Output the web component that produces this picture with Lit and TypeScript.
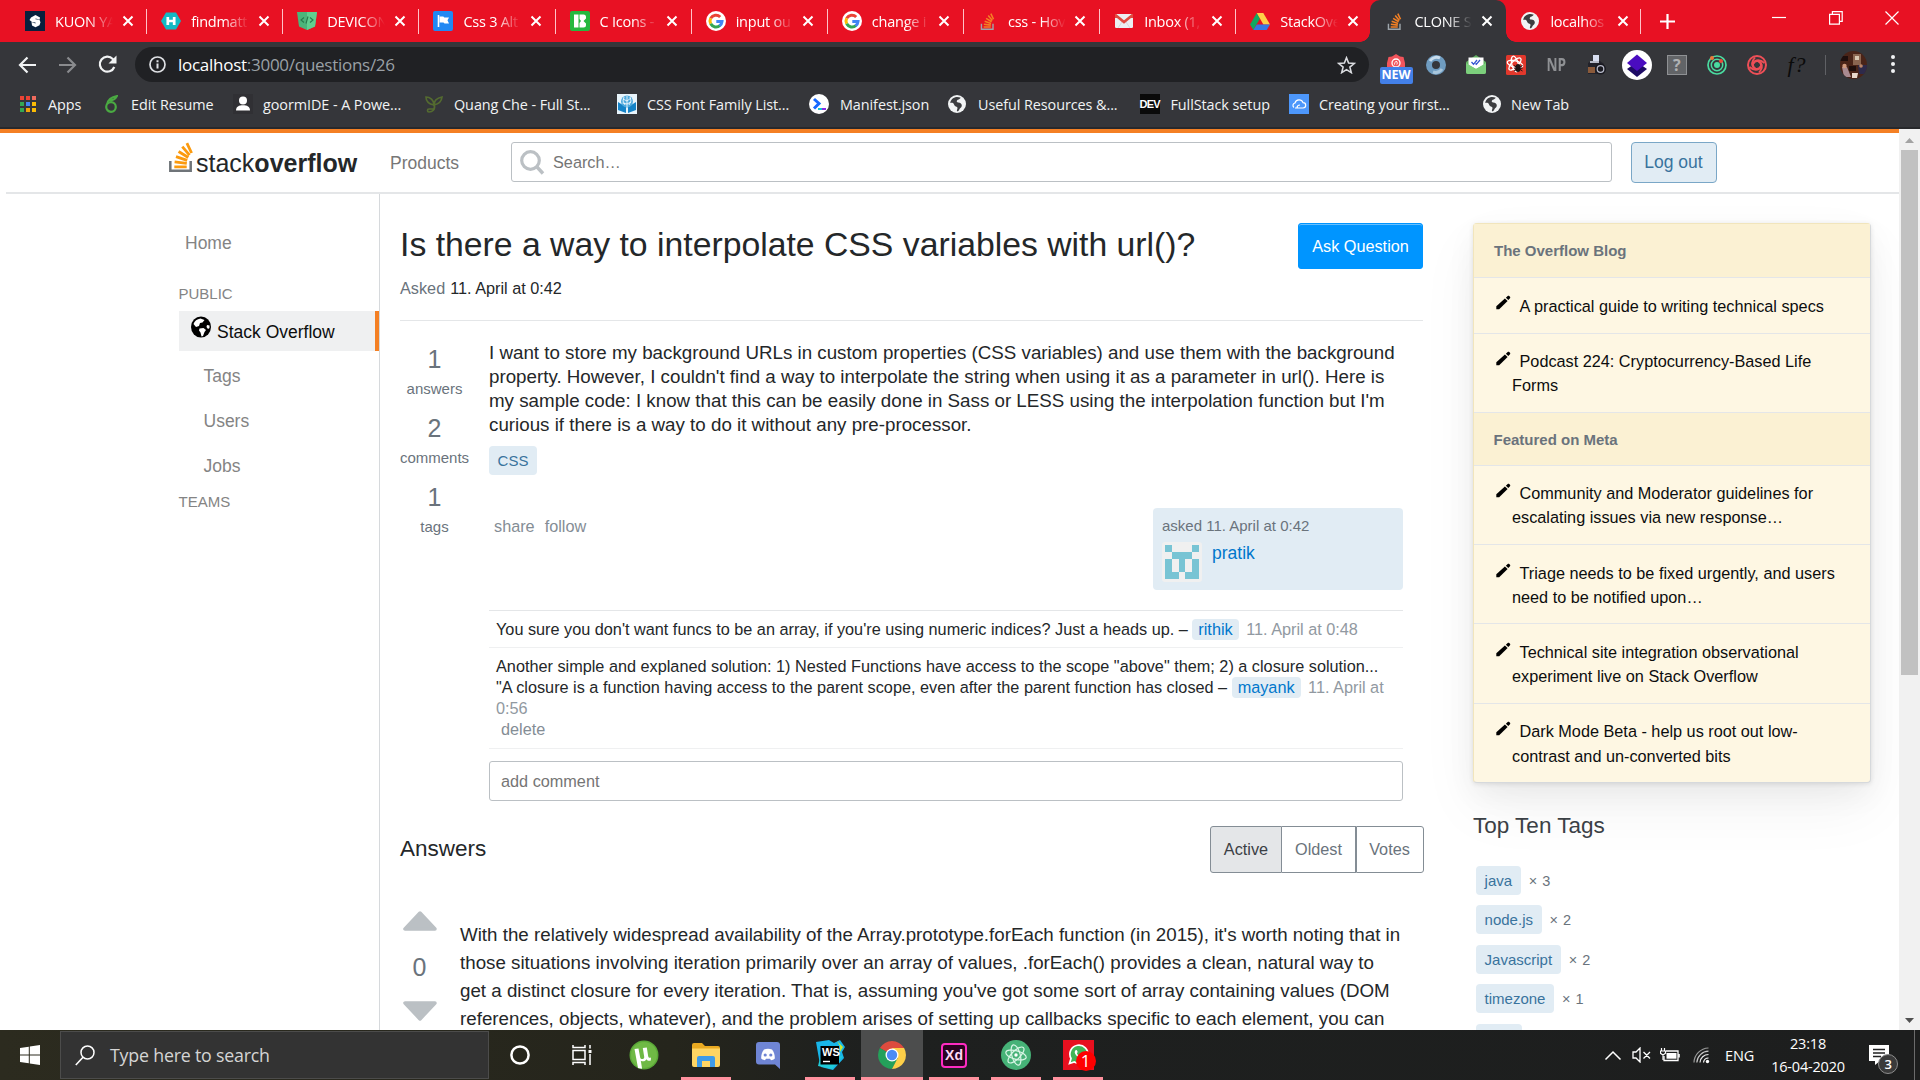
import { LitElement, html, css, svg, TemplateResult } from "lit";
import { customElement } from "lit/decorators.js";
import { classMap } from "lit/directives/class-map.js";

const icon = (w: number, h: number, box: string, body: unknown) =>
  html`<svg width=${w} height=${h} viewBox=${box} fill="none">${body}</svg>`;

const globe = (size = 18) =>
  icon(size, size, "0 0 18 18", svg`<circle cx="9" cy="9" r="9" fill="#f1f3f4"/>
    <path d="M12.800 2.800C11.500 4.800 9.800 4.300 9 5.600c-.6 1-.2 1.700 1.200 1.900 2.200.2 3.800 1.200 3.600 3.300-.2 1.900-1.900 2.300-2.500 3.600-.4.900-.9 1.700-2.300 1.900-.4-1.500.7-2.300.5-3.500-.2-1.100-1.500-1-2.500-1.800-1.100-1-.8-2.100-2-2.900C4.200 7.500 3 7.500 2.200 8 2.500 5 5 2.300 8.500 1.900c1.600-.1 3 .2 4.300.9z" fill="#3c3d40"/>`);

const stackIcon = (w: number, h: number, base: string, bar: string) =>
  icon(w, h, "0 0 24 30", svg`<path d="M1.300 19v9.700h20.400V19" stroke=${base} stroke-width="2.500"/>
    <g stroke=${bar} stroke-width="2.800"><path d="M5.300 24.600h12.400M5.600 19.700l12.200 1.500M7 14.500l11.200 3.700M9.600 9.300l9.700 6M13.300 4.400l7.200 8.500M17.900 1l4.700 9.800" transform="translate(0 .2)"/></g>`);

const google = icon(20, 20, "0 0 20 20", svg`<circle cx="10" cy="10" r="10" fill="#fff"/><g stroke-width="3" transform="translate(10 10)">
  <path d="M4.200-4A6 6 0 0 0-5.300-2.800" stroke="#ea4335"/><path d="M-5.300-2.800A6 6 0 0 0-5.300 2.800" stroke="#fbbc05"/>
  <path d="M-5.300 2.800A6 6 0 0 0 4 4.500" stroke="#34a853"/><path d="M3.600 4.800A6 6 0 0 0 6 .6H.3" stroke="#4285f4"/></g>`);

const favicons: Record<string, TemplateResult> = {
  kuon: icon(20, 20, "0 0 20 20", svg`<rect width="20" height="20" fill="#07203d"/><path d="M15 6.500 10.500 4 6 6.500 4.500 9l2.500 2 3.500.5v1L6.500 11l.5 3.500 3.500 1.700 4-2 1-3-1-2.500-4-.5V7.400l4.200 1z" fill="#fff"/>`),
  hex: icon(20, 20, "0 0 20 20", svg`<path d="M5 1.500h10L20 10l-5 8.500H5L0 10z" fill="#13b9c4"/><path d="M6.800 6v8M13.200 6v8M7 10h6" stroke="#fff" stroke-width="2.700"/>`),
  devicon: icon(20, 20, "0 0 20 20", svg`<path d="M0 1h20l-2 14.500L10 19l-8-3.500z" fill="#4bb57a"/><path d="M10 1h10l-2 14.500L10 19z" fill="#60cf8f"/><path d="m7 6.500-3 2.500 3 2.500m6-5 3 2.500-3 2.500M11 5.500l-2 7" stroke="#27794c" stroke-width="1.100"/>`),
  flag: icon(20, 20, "0 0 20 20", svg`<rect width="20" height="20" rx="2" fill="#2188f3"/><path d="M5.500 4v12" stroke="#fff" stroke-width="1.600"/><path d="M6.500 5.500h3.800l1 1H16L14.500 9.300 16 12.500h-4.500l-1-1h-4z" fill="#fff"/>`),
  icons8: icon(20, 20, "0 0 20 20", svg`<rect width="20" height="20" rx="2" fill="#25b83f"/><path d="M4 3.500h4.500v13H4zM9.500 3.500h4A2.500 2.500 0 0 1 16 6v1.500L13.500 10l2.500 2.500V14a2.500 2.500 0 0 1-2.500 2.500h-4V12l1.500-2-1.500-2z" fill="#fff"/>`),
  google,
  so: stackIcon(15, 17, "#9da5ab", "#f48024"),
  gmail: icon(18, 14, "0 0 18 14", svg`<rect width="18" height="14" rx="1.300" fill="#eceff1"/><path d="m3 14 4.300-6.500M15 14l-4.300-6.500" stroke="#d4d9dc"/><path d="M1.300 4V1.700L9 8l7.700-6.300V4" stroke="#e04a3f" stroke-width="2.600"/>`),
  drive: icon(20, 17, "0 0 20 17", svg`<path d="M6.800 0 0 11.500 3.400 17 10 5.600z" fill="#11a861"/><path d="M6.800 0h6.500L20 11.500h-6.600z" fill="#ffcf48"/><path d="M6.800 11.500H20L16.700 17H3.400z" fill="#3777e3"/>`),
  globe: globe(18),
};

const tabs = [
  ["kuon", "KUON YA"], ["hex", "findmatt"], ["devicon", "DEVICON"], ["flag", "Css 3 Alt"],
  ["icons8", "C Icons -"], ["google", "input ou"], ["google", "change i"], ["so", "css - Hov"],
  ["gmail", "Inbox (1,"], ["drive", "StackOve"], ["so", "CLONE S"], ["globe", "localhos"],
];

const appsGrid = icon(16, 16, "0 0 16 16", [
  ["#ea4335", "#ea4335", "#f06b5d"], ["#34a853", "#4285f4", "#fbbc05"], ["#34a853", "#f0a30a", "#fbbc05"],
].flatMap((row, y) => row.map((c, x) => svg`<rect x=${x * 6} y=${y * 6} width="4" height="4" fill=${c}/>`)));

const bookmarks: { w: number; iw: number; g: number; label: string; art: TemplateResult }[] = [
  { w: 84, iw: 17, g: 11, label: "Apps", art: appsGrid },
  { w: 129, iw: 14, g: 13, label: "Edit Resume", art: icon(14, 18, "0 0 14 18", svg`<circle cx="7" cy="12" r="4.800" stroke="#4aaa42" stroke-width="2.200"/><path d="M3.300 9C4 4.500 7 2 13 1c-1 2-3 4.500-8 4.500" stroke="#4aaa42" stroke-width="1.900"/>`) },
  { w: 192, iw: 20, g: 10, label: "goormIDE - A Powe...", art: icon(20, 20, "0 0 20 20", svg`<rect width="20" height="20" fill="#303034"/><circle cx="10" cy="6.500" r="4" fill="#fff"/><path d="M3 16.500c0-4 3-5.300 7-5.300s7 1.300 7 5.300z" fill="#fff"/>`) },
  { w: 192, iw: 18, g: 11, label: "Quang Che - Full St...", art: icon(18, 18, "0 0 18 18", svg`<path d="M9 10C9 5 5 2 1 2c0 4 3 7 8 8zm0 0c0-4 3-7 8-8-.5 5-3.500 7-8 8z" stroke="#546b30" stroke-width="1.700"/><path d="M9 9c2 6-2 8-5 8-2 0-2-3 0-3h5" stroke="#546b30" stroke-width="1.700"/>`) },
  { w: 192, iw: 20, g: 10, label: "CSS Font Family List...", art: icon(20, 20, "0 0 20 20", svg`<rect width="20" height="20" fill="#e8f4fb"/><path d="M1 8l8 5v6l-8-3zM19 8l-8 5v6l8-3z" fill="#1583c7"/><circle cx="10" cy="7.500" r="6" fill="#50aadd"/><path d="M10 2v11M6 5l4 2 4-3M5.500 9l4.500 1 4-2M7 3l-1 4 2 4M13 3l1 4-2 4" stroke="#fff" stroke-width=".8"/>`) },
  { w: 139, iw: 20, g: 11, label: "Manifest.json", art: icon(20, 20, "0 0 20 20", svg`<circle cx="10" cy="10" r="10" fill="#fff"/><path d="m5 5 5 4.500-5 5" stroke="#1769ff" stroke-width="3"/><path d="M9 15h4" stroke="#12c2d6" stroke-width="2"/><path d="M13 15h4" stroke="#8a2be2" stroke-width="2"/>`) },
  { w: 191.500, iw: 18, g: 12, label: "Useful Resources &...", art: globe(18) },
  { w: 149.500, iw: 20, g: 11, label: "FullStack setup", art: html`<span class="dev">DEV</span>` },
  { w: 194, iw: 20, g: 10, label: "Creating your first...", art: icon(20, 20, "0 0 20 20", svg`<rect width="20" height="20" fill="#4d97fb"/><path d="M6 14h8a2.700 2.700 0 0 0 0-5.400A4.200 4.200 0 0 0 6 9a2.500 2.500 0 0 0-1 4.500M8 14c0-2 1.500-3 3-3" stroke="#fff" stroke-width="1.200"/>`) },
  { w: 90, iw: 18, g: 10, label: "New Tab", art: globe(18) },
];

const extensions: TemplateResult[] = [
  html`<span class="newext">${icon(20, 16, "0 0 20 16", svg`<path d="M2.500 3 6 2.500 10 0l4 2.500 3.500.5L19 9v7H1V9z" fill="#f2545b"/><circle cx="10" cy="9" r="4" stroke="#fff" stroke-width="1.300"/><path d="M8.500 10.500c0-2 1-2.500 1.800-3.500 1.200 1.500 1.200 2.500.5 3.500" stroke="#fff"/>`)}<b>NEW</b></span>`,
  icon(20, 20, "0 0 20 20", svg`<circle cx="10" cy="10" r="7" stroke="#6f9cc0" stroke-width="6"/><path d="M4 6a8 8 0 0 1 10-3" stroke="#c8dcec" stroke-width="3"/><path d="M16 14a8 8 0 0 1-9 3" stroke="#a9c6dc" stroke-width="3"/>`),
  icon(20, 20, "0 0 20 20", svg`<path d="M0 7 10 0l10 7v10a2 2 0 0 1-2 2H2a2 2 0 0 1-2-2z" fill="#5faf5f"/><path d="M2.500 2.500h15V10L10 14 2.500 10z" fill="#fff"/><path d="M0 8l10 6 10-6v9a2 2 0 0 1-2 2H2a2 2 0 0 1-2-2z" fill="#7ccf7c"/><path d="m5.500 7 2 2.300L11 5m-1.500 3.500.8.8L14 5" stroke="#3455d1" stroke-width="1.300"/>`),
  icon(20, 20, "0 0 20 20", svg`<rect width="20" height="20" rx="1.500" fill="#e2382c"/><g stroke="#fff" stroke-width="1.300"><ellipse cx="9" cy="9" rx="8" ry="3.200" transform="rotate(15 9 9)"/><ellipse cx="9" cy="9" rx="8" ry="3.200" transform="rotate(75 9 9)"/><ellipse cx="9" cy="9" rx="8" ry="3.200" transform="rotate(135 9 9)"/></g><ellipse cx="12" cy="13" rx="2.600" ry="4" fill="#1d1414"/><path d="M8 10.500l8.500 5.500M8 16l8.500-5.500M8 13.200h8.500" stroke="#1d1414"/>`),
  html`<span class="np">NP</span>`,
  icon(20, 20, "0 0 20 20", svg`<path d="M6 0h6v6H6z" fill="#d8def0"/><path d="M1 8l4-2h8l4 3v10H1z" fill="#22222a"/><path d="M1 12h7v6H1z" fill="#8a5a3a"/><circle cx="13.500" cy="14" r="5.500" fill="#1a1a20"/><circle cx="13.500" cy="14" r="3.300" stroke="#b9bccb" stroke-width="1.200"/><path d="M3 7h9" stroke="#c8ccda" stroke-width="1.800"/>`),
  icon(30, 30, "0 0 30 30", svg`<circle cx="15" cy="15" r="15" fill="#fff"/><path d="m15 12 10 7-10 8-10-8z" fill="#1e0b66"/><path d="m15 4.500 10 8.500-10 8-10-8z" fill="#4a0cc0"/>`),
  html`<span class="qbox">?</span>`,
  icon(20, 20, "0 0 20 20", svg`<circle cx="10" cy="10" r="9" stroke="#4adba0" stroke-width="1.700"/><circle cx="10" cy="10" r="5.700" stroke="#4adba0" stroke-width="1.500"/><circle cx="10" cy="10" r="3" fill="#4adba0"/><circle cx="5" cy="3" r="2" fill="#f07838"/><circle cx="14" cy="6" r="2" fill="#f04a38"/>`),
  icon(20, 20, "0 0 20 20", svg`<circle cx="10" cy="10" r="9" stroke="#ee4f57" stroke-width="2"/><g stroke="#ee4f57" stroke-width="1.800">${[0, 90, 180, 270].map(a => svg`<path d="M6.500 8.500C8 5.500 12 5 14 8c1.500 2.500 1 6-2 9.500" transform="rotate(${a} 10 10)"/>`)}</g>`),
  html`<span class="fq">f?</span>`,
];

const sideItems: { text: string; kind: string }[] = [
  { text: "Home", kind: "home" }, { text: "PUBLIC", kind: "head public" }, { text: "Stack Overflow", kind: "active" },
  { text: "Tags", kind: "sub" }, { text: "Users", kind: "sub" }, { text: "Jobs", kind: "sub" }, { text: "TEAMS", kind: "head" },
];

const blog: { head?: string; lines?: string[] }[] = [
  { head: "The Overflow Blog" },
  { lines: ["A practical guide to writing technical specs"] },
  { lines: ["Podcast 224: Cryptocurrency-Based Life", "Forms"] },
  { head: "Featured on Meta" },
  { lines: ["Community and Moderator guidelines for", "escalating issues via new response…"] },
  { lines: ["Triage needs to be fixed urgently, and users", "need to be notified upon…"] },
  { lines: ["Technical site integration observational", "experiment live on Stack Overflow"] },
  { lines: ["Dark Mode Beta - help us root out low-", "contrast and un-converted bits"] },
];

const pencil = icon(15, 15, "0 0 15 15", svg`<path d="M.3 14.300v-3l8.600-7.800 2.700 2.500-8.400 8.300z" fill="#000"/><path d="m9.900 2.800 1.800-1.800c.5-.5 1.100-.4 1.500-.1l.8.8c.4.400.4 1 0 1.500l-1.700 1.900z" fill="#000"/>`);

const tray = {
  chevron: icon(18, 11, "0 0 18 11", svg`<path d="m1.500 9.500 7.500-7.500 7.500 7.500" stroke="#fff" stroke-width="1.500"/>`),
  sound: icon(20, 16, "0 0 20 16", svg`<path d="M1 5h3l4-4v14l-4-4H1zM11.500 5l6.500 6.500M18 5l-6.500 6.500" stroke="#fff" stroke-width="1.300"/>`),
  battery: icon(20, 14, "0 0 20 14", svg`<path d="M6 3h12v9.500H4V8" stroke="#fff" stroke-width="1.300"/><path d="M6.500 5h10v5.700h-10z" fill="#fff"/><path d="M19 6v3.500" stroke="#fff" stroke-width="1.600"/><path d="M.5 3h5v2.300L3 7 .5 5.300zM1.500 0v3M4.500 0v3M3 6v6" stroke="#fff" stroke-width="1.200"/>`),
  wifi: icon(17, 17, "0 0 17 17", svg`<g stroke="#fff" stroke-width="1.200"><path d="M10.500 15.500a5 5 0 0 1 5-4.500"/><path d="M7 15.500a8.500 8.500 0 0 1 8.500-8" opacity=".9"/><path d="M3.800 15.500A12 12 0 0 1 15.500 4.200" opacity=".75"/><path d="M1 15.500A15 15 0 0 1 15.500 1" opacity=".55"/></g><circle cx="14.500" cy="14.500" r="1.700" fill="#fff"/>`),
};

const taskApps: { art: TemplateResult; run?: boolean; active?: boolean }[] = [
  { art: icon(20, 22, "0 0 20 22", svg`<circle cx="10" cy="11" r="8.600" stroke="#fff" stroke-width="2.500"/>`) },
  { art: icon(22, 20, "0 0 22 20", svg`<path d="M2 5.500h12v9H2zM2 0v2.500h12V0M2 20v-2.500h12V20M19 0v3.500M19 9v11" stroke="#fff" stroke-width="1.500"/><rect x="17.500" y="5" width="3" height="3" fill="#fff"/>`) },
  { art: icon(30, 30, "0 0 30 30", svg`<circle cx="15" cy="15" r="14.500" fill="#5aa837"/><circle cx="15" cy="15" r="13" fill="#6fb945"/><path d="M9 28 5.500 9l4-.5 1.700 9c.5 2.500 4.500 2 4-.8L13.800 8l4-.6 1.400 8.800c.3 1.600 1.600 2 2.800 1.300l-.2 3c-1.500.7-3.500.3-4.300-1.200-1 2-3.500 2.700-5.700 1.400l1.300 8z" fill="#fff"/>`) },
  { run: true, art: icon(28, 24, "0 0 28 24", svg`<path d="M0 2a2 2 0 0 1 2-2h8l3 3h13a2 2 0 0 1 2 2v7H0z" fill="#e9a921"/><path d="M0 5.500h28V22a2 2 0 0 1-2 2H2a2 2 0 0 1-2-2z" fill="#ffd563"/><path d="M5 24V15a2 2 0 0 1 2-2h14a2 2 0 0 1 2 2v9h-5v-6h-8v6z" fill="#3f9be8"/>`) },
  { art: icon(24, 27, "0 0 24 27", svg`<path d="M3 0h18a3 3 0 0 1 3 3v24l-5-4.500H3a3 3 0 0 1-3-3V3a3 3 0 0 1 3-3z" fill="#6f85d4"/><path d="M8 7.500c2.500-1 5.500-1 8 0 2 2.600 3 5.500 2.800 9-1.200 1-2.300 1.500-3.800 1.800l-1-1.600h-4l-1 1.600c-1.500-.3-2.600-.8-3.800-1.800C5 13 6 10.100 8 7.500z" fill="#fff"/><circle cx="9.200" cy="13" r="1.600" fill="#6f85d4"/><circle cx="14.800" cy="13" r="1.600" fill="#6f85d4"/>`) },
  { run: true, art: html`<span class="ws">${icon(30, 30, "0 0 30 30", svg`<path d="M1 2 14 0l5 3 6-3 5 7-3 5 2 6-11 12-12-3-2-8z" fill="#18b5e8"/><path d="m22 1 6 6-3 5V6z" fill="#c9ea35"/><path d="M5 18 3 26l14 3 11-13z" fill="#20cbd8"/><rect x="5.500" y="6" width="18.500" height="18.500" fill="#000"/><path d="M8 21.500h7" stroke="#fff" stroke-width="1.400"/>`)}<b>WS</b></span>` },
  { run: true, active: true, art: icon(28, 28, "0 0 28 28", svg`<path d="M14 14 1.900 7A14 14 0 0 1 26.100 7z" fill="#dd4b3e"/><path d="M14 14 1.900 7A14 14 0 0 0 14 28l5.700-10z" fill="#24a05a"/><path d="M14 28A14 14 0 0 0 26.100 7H14l5.600 10.200z" fill="#fdcf48"/><circle cx="14" cy="14" r="6.500" fill="#fff"/><circle cx="14" cy="14" r="5.200" fill="#4c8bf5"/>`) },
  { run: true, art: html`<span class="xd">Xd</span>` },
  { run: true, art: icon(30, 30, "0 0 30 30", svg`<circle cx="15" cy="15" r="15" fill="#46b277"/><g stroke="#d8f5e5" stroke-width="1.200"><ellipse cx="15" cy="15" rx="10.500" ry="4.200" transform="rotate(15 15 15)"/><ellipse cx="15" cy="15" rx="10.500" ry="4.200" transform="rotate(75 15 15)"/><ellipse cx="15" cy="15" rx="10.500" ry="4.200" transform="rotate(135 15 15)"/></g><circle cx="15" cy="15" r="1.700" fill="#fff"/>`) },
  { run: true, art: html`<span class="wa">${icon(31, 30, "0 0 31 30", svg`<rect width="31" height="30" fill="#e8101f"/><path d="M6.500 23.500 8 18.500a9 9 0 1 1 3.300 3.400z" fill="#41b457" stroke="#fff" stroke-width="1.700"/><path d="M12 11c1-1.600 2-.9 2.600.8.300.9-1.100 1.300-.4 2.300 1 1.400 2 2 3.300 2.500.8.200 1.200-1.500 2-1.200 2 .8 2 1.500 1.300 2.300-1.700 1.800-4.500.5-6.300-1-2-1.700-3.500-4-2.500-5.700z" fill="#fff"/>`)}<b>1</b></span>` },
];

@customElement("app-root")
export class AppRoot extends LitElement {
  static styles = css`
    :host { display: flex; flex-direction: column; width: 1920px; height: 1080px; overflow: hidden; background: #fff; font-family: "Liberation Sans", Arial, sans-serif; color: #242729; }
    * { box-sizing: border-box; }
    svg { display: block; flex: none; }
    .ui { font-family: "Open Sans", "Noto Sans", sans-serif; }
    .tabstrip { height: 42px; flex: none; background: #e81123; display: flex; align-items: stretch; padding-left: 11px; color: #fff; }
    .tab { width: 136.150px; flex: none; display: flex; align-items: center; padding-left: 14px; position: relative; }
    .tab::after { content: ""; position: absolute; right: 0; top: 9px; width: 1px; height: 25px; background: #ffc2c7; }
    .tab.active { background: #35363a; border-radius: 10px 10px 0 0; width: 136px; }
    .tab.active::before { content: ""; position: absolute; left: -10px; right: -10px; bottom: 0; height: 10px;
      background: radial-gradient(circle at 0 0, transparent 9.500px, #35363a 10px) left / 10px 10px no-repeat, radial-gradient(circle at 100% 0, transparent 9.500px, #35363a 10px) right / 10px 10px no-repeat; }
    .tab.active::after, .tab.quiet::after { display: none; }
    .tab.quiet { width: 134.200px; }
    .tab.lasttab { width: 135px; }
    .fav { width: 20px; margin-right: 10px; display: flex; justify-content: center; flex: none; }
    .tabtext { width: 64px; margin-right: -7px; font-size: 14.500px; letter-spacing: -.25px; white-space: nowrap; flex: none; -webkit-mask-image: linear-gradient(90deg, #000 33px, transparent 58px); mask-image: linear-gradient(90deg, #000 33px, transparent 58px); }
    .close { margin-left: 9.500px; }
    .plus { margin: 0 0 0 19px; display: flex; align-items: center; }
    .winbtns { margin-left: auto; display: flex; align-items: center; height: 36px; gap: 42.500px; padding-right: 21px; }
    .toolbar { height: 44px; flex: none; background: #35363a; display: flex; align-items: center; padding: 1px 0 0 18px; }
    .nav { display: flex; align-items: center; gap: 21px; width: 117px; }
    .omni { width: 1234px; height: 35px; border-radius: 18px; background: #202124; color: #9aa0a6; display: flex; align-items: center; padding: 0 13px 0 14px; }
    .url { margin: -1px 0 0 12px; font-size: 17px; letter-spacing: -.27px; }
    .url b { font-weight: 400; color: #fff; }
    .star { margin-left: auto; }
    .exts { display: flex; margin-left: 7px; height: 40px; }
    .ext { width: 40.100px; display: flex; align-items: center; justify-content: center; }
    .newext { width: 34px; display: flex; flex-direction: column; align-items: center; padding-top: 8px; }
    .newext b { font: 700 12.500px "Open Sans", sans-serif; line-height: 16px; width: 33px; height: 17px; margin-top: -3px; background: #4380e8; color: #fff; border-radius: 2px; text-align: center; z-index: 1; }
    .np { color: #8f9194; font: 700 17px "Open Sans", sans-serif; transform: scaleX(.8); }
    .qbox { width: 20px; height: 20px; background: #626467; border: 1px solid #8f9194; color: #b0b2b4; font: 700 16px/18px "Open Sans", sans-serif; text-align: center; }
    .fq { color: #0b0b0b; font: italic 22px/24px "Liberation Serif", serif; letter-spacing: 1px; }
    .vsep { width: 1px; height: 20px; background: #606165; margin: 10px 14px 0 8px; }
    .avatar { margin-top: 6px; }
    .dots { margin: 9px 0 0 24px; }
    .bookmarks { height: 41px; flex: none; background: #35363a; display: flex; align-items: flex-start; padding: 7px 0 0 20px; color: #f1f3f4; font-size: 14.400px; letter-spacing: -.07px; }
    .bm { display: flex; align-items: center; flex: none; height: 22px; white-space: nowrap; }
    .bmi { display: flex; flex: none; }
    .dev { width: 20px; height: 20px; background: #0a0a0a; color: #fff; font: 700 11px/20px "Liberation Sans", sans-serif; letter-spacing: -.8px; text-align: center; }
    .edge { height: 2px; flex: none; background: #28292c; }
    .viewport { height: 901px; flex: none; display: flex; overflow: hidden; }
    .page { width: 1899px; flex: none; border-top: 4px solid #f48024; display: flex; flex-direction: column; height: 901px; overflow: hidden; }
    .header { height: 61px; flex: none; border-bottom: 2px solid #e4e6e8; margin-left: 6px; padding-left: 162.500px; display: flex; align-items: flex-start; }
    .logo { display: flex; margin-top: 9px; width: 221.500px; }
    .logotext { font-size: 25px; line-height: 28px; margin: 7px 0 0 3.500px; }
    .products { font-size: 17.500px; line-height: 20px; margin-top: 20px; color: #777; width: 121px; }
    .search { width: 1101px; height: 40px; margin-top: 9px; border: 1px solid #bbc0c4; border-radius: 3px; display: flex; align-items: center; padding-left: 8px; font-size: 16.250px; color: #757575; }
    .search span { margin-left: 8px; }
    .logout { margin: 9px 0 0 19px; width: 86px; height: 41px; border: 1px solid #7aa7c7; border-radius: 4px; background: #e1ecf4; color: #39739d; font-size: 17.500px; line-height: 38px; text-align: center; text-indent: -1px; }
    .cols { flex: 1; display: flex; min-height: 0; }
    .side { width: 380px; flex: none; border-right: 1px solid #d6d9dc; padding: 39px 0 0 179px; font-size: 17.500px; color: #848484; }
    .side div { line-height: 20px; }
    .home { padding-left: 6px; margin-bottom: 31px; }
    .side .head { font-size: 15px; text-indent: -.5px; }
    .side .public { margin-bottom: 7px; }
    .side .active { height: 40px; background: #eff0f1; border-right: 4px solid #f48024; color: #0c0d0e; display: flex; padding: 5px 0 0 12px; margin-bottom: 15px; }
    .side .active span { margin: 6px 0 0 6px; }
    .side .sub { padding-left: 24.500px; margin-bottom: 25px; }
    .side .sub.last { margin-bottom: 16px; }
    .main { width: 1024px; flex: none; margin-left: 20px; padding-top: 29px; white-space: nowrap; }
    .titlerow { display: flex; justify-content: space-between; height: 46px; width: 1023px; }
    h1 { margin: 0; font-size: 33.750px; font-weight: 400; line-height: 43px; }
    .ask { width: 125px; height: 46px; background: #0095ff; border-radius: 3px; border: 1px solid #0095ff; box-shadow: inset 0 1px 0 rgba(255,255,255,.4); color: #fff; font-size: 16.250px; line-height: 44px; text-align: center; }
    .asked { font-size: 16.250px; line-height: 20px; margin-top: 9px; color: #242729; }
    .asked span { color: #6a737c; margin-right: 5px; }
    .rule { height: 1px; width: 1023px; background: #e4e6e8; margin-top: 22px; }
    .post { display: flex; height: 481px; }
    .stats { width: 69px; margin-right: 20px; flex: none; padding-top: 23px; color: #6a737c; text-align: center; }
    .stat { height: 69px; display: flex; flex-direction: column; align-items: center; }
    .stat b { font-weight: 400; font-size: 25px; line-height: 30px; }
    .stat span { font-size: 15px; line-height: 20px; margin-top: 5px; }
    .body { width: 914px; flex: none; padding-top: 20px; }
    .text { font-size: 18.750px; line-height: 24.150px; height: 97px; }
    .chip { display: inline-block; background: #e1ecf4; color: #39739d; border-radius: 4px; font-size: 15px; line-height: 29px; height: 29px; padding: 0 8.600px; }
    .qtag { margin-top: 8px; height: 29px; }
    .actions { display: flex; justify-content: space-between; height: 82px; margin-top: 33px; }
    .links { font-size: 16.250px; color: #848d95; display: flex; gap: 10px; padding: 8px 0 0 5px; line-height: 20px; }
    .card { width: 250px; height: 82px; background: #e1ecf4; border-radius: 4px; padding: 8px 9px; font-size: 15px; line-height: 20px; color: #6a737c; }
    .who { display: flex; margin-top: 6px; }
    .who span { color: #0077cc; font-size: 17.500px; line-height: 22px; margin-left: 10px; }
    .comments { margin-top: 20px; border-top: 1px solid #e4e6e8; font-size: 16.250px; line-height: 21px; }
    .comment { border-bottom: 1px solid #eff0f1; padding: 8px 7px 7px; }
    .comment + .comment { padding-bottom: 8px; }
    .comment .ln { height: 21px; }
    .comment em { font-style: normal; color: #9199a1; }
    .userchip { background: #e1ecf4; color: #0077cc; border-radius: 4px; padding: 1px 6px 2px; margin: 0 3px 0 0; }
    .comment .del { padding-left: 5px; color: #848d95; }
    .addc { height: 40px; border: 1px solid #bbc0c4; border-radius: 3px; margin-top: 12px; padding-left: 11px; font-size: 16.250px; line-height: 39px; color: #757575; }
    .arow { display: flex; justify-content: space-between; align-items: center; height: 47px; margin-top: 24px; width: 1024px; font-size: 22.500px; }
    .arow > span { margin-top: -1px; }
    .group { display: flex; height: 47px; font-size: 16.250px; line-height: 44px; color: #6a737c; text-align: center; }
    .group div { border: 1px solid #848d95; }
    .group .g1 { width: 72px; background: #e4e6e8; color: #3b4045; border-radius: 3px 0 0 3px; }
    .group .g2 { width: 74px; border-left: 0; }
    .group .g3 { width: 68px; border-radius: 0 3px 3px 0; text-indent: -1px; }
    .answer { display: flex; margin-top: 38px; }
    .vote { width: 34px; margin-left: 3px; display: flex; flex-direction: column; align-items: center; font-size: 25px; color: #6a737c; }
    .vote span { line-height: 30px; margin: 21px 1px 19px 0; }
    .atext { margin: 10px 0 0 23px; font-size: 18.750px; line-height: 28.125px; }
    .right { margin-left: 49px; padding-top: 29px; width: 398px; flex: none; white-space: nowrap; }
    .widget { border: 1px solid #f1e5bc; border-right-color: #d6d9dc; border-bottom-color: #d6d9dc; border-radius: 4px; background: #fef7e3; box-shadow: 0 12px 30px rgba(0,0,0,.05), 0 25px 60px rgba(0,0,0,.05), 0 1px 5px rgba(0,0,0,.1); }
    .whead { height: 53.500px; background: #fbf1d3; font-size: 15px; font-weight: 700; color: #6a737c; line-height: 54px; padding-left: 20px; border-bottom: 1px solid #e4e6e8; }
    .witem + .whead { height: 52.500px; line-height: 53px; text-indent: -.5px; }
    .witem { border-bottom: 1px solid #e4e6e8; font-size: 16.250px; line-height: 24.200px; color: #0c0d0e; padding: 15.500px 0 14.500px 38px; position: relative; }
    .whead + .witem { padding-top: 16.500px; }
    .whead + .witem.two { padding-top: 15.500px; }
    .witem.last { border-bottom: 0; }
    .witem div:first-of-type { padding-left: 7.500px; }
    .witem svg { position: absolute; left: 22px; top: 17.500px; }
    .ttt { font-size: 22.500px; line-height: 28px; color: #3b4045; margin: 29px 0 25.500px 0; }
    .trow { display: flex; height: 39.500px; padding-left: 3px; font-size: 15px; line-height: 30px; color: #6a737c; }
    .trow .x { margin-left: 8px; word-spacing: 1px; font-size: 14.500px; }
    .scroll { width: 21px; background: #f1f1f1; display: flex; flex-direction: column; align-items: center; padding: 9px 0 7px; }
    .thumb { width: 17px; height: 525px; background: #c1c1c1; margin: 7px 0 auto; }
    .taskbar { height: 50px; flex: none; background: linear-gradient(90deg, #2c2b1f 0, #25251c 35%, #1e201f 45%, #1d1e1e 100%); display: flex; color: #fff; }
    .win { width: 60px; display: flex; align-items: center; justify-content: center; }
    .tsearch { width: 429px; margin: 1px 0; background: #333; border: 1px solid #4c4c4b; display: flex; align-items: center; padding-left: 14px; font-size: 17.800px; letter-spacing: -.2px; color: #d5d5d5; }
    .tsearch span { margin-left: 15px; }
    .app { width: 62px; display: flex; align-items: center; justify-content: center; position: relative; }
    .app.run::after { content: ""; position: absolute; left: 6px; right: 6px; bottom: 0; height: 3px; background: #ff919e; }
    .app.active { background: #4c4d4d; }
    .app.active::after { left: 0; right: 0; }
    .ws, .wa { position: relative; }
    .ws b { position: absolute; left: 7px; top: 6px; font: 700 11px/13px "Liberation Sans", sans-serif; }
    .wa b { position: absolute; left: 13px; top: 11px; width: 20px; height: 20px; border-radius: 50%; background: #f00; font: 400 17px/20px "Open Sans", sans-serif; text-align: center; }
    .xd { width: 26px; height: 25px; border: 2px solid #ff2bc2; border-radius: 4px; background: #2a0320; font: 700 14px/20px "Liberation Sans", sans-serif; text-align: center; color: #ffd9f5; }
    .tray { margin-left: auto; display: flex; align-items: center; font-size: 14.500px; letter-spacing: -.2px; }
    .t1 { margin-right: 10px; } .t2 { margin-right: 8px; } .t3 { margin-right: 13px; } .t4 { margin-right: 15px; }
    .clock { text-align: center; line-height: 23px; width: 90px; margin-left: 9px; }
    .clock div { white-space: nowrap; }
    .note { position: relative; margin: 0 25px 0 16px; width: 20px; height: 20px; }
    .note b { position: absolute; left: 9px; top: 9px; width: 20px; height: 20px; border-radius: 50%; border: 1px solid #8d8d8d; background: #3a3a3a; font-size: 13px; line-height: 18px; text-align: center; font-weight: 600; }
    .peek { width: 1px; height: 50px; background: #6b6b6b; margin-right: 5px; }
  `;

  private chrome() {
    return html`
      <div class="tabstrip ui">
        ${tabs.map(([f, t], i) => html`<div class=${classMap({ tab: true, active: i === 10, quiet: i === 9, lasttab: i === 11 })}>
          <span class="fav">${favicons[f]}</span><span class="tabtext">${t}</span>
          <svg class="close" width="12" height="12" viewBox="0 0 12 12"><path d="m1.500 1.500 9 9m0-9-9 9" stroke="#fff" stroke-width="2"/></svg>
        </div>`)}
        <span class="plus">${icon(15, 15, "0 0 15 15", svg`<path d="M7.500 0v15M0 7.500h15" stroke="#fff" stroke-width="2.200"/>`)}</span>
        <span class="winbtns">
          ${icon(14, 14, "0 0 14 14", svg`<path d="M0 6.500h14" stroke="#fff" stroke-width="1.200"/>`)}
          ${icon(14, 14, "0 0 14 14", svg`<path d="M.6 3.400h9.800v9.800H.6zM3.400 3V.6h9.800v9.800h-2.400" stroke="#fff" stroke-width="1.200"/>`)}
          ${icon(14, 14, "0 0 14 14", svg`<path d="m.5.5 13 13m0-13-13 13" stroke="#fff" stroke-width="1.200"/>`)}
        </span>
      </div>
      <div class="toolbar ui">
        <span class="nav">
          ${icon(19, 18, "0 0 19 18", svg`<path d="M18 9H3M9.500 1.500 2 9l7.500 7.500" stroke="#f1f3f4" stroke-width="2.200"/>`)}
          ${icon(19, 18, "0 0 19 18", svg`<path d="M1 9h15M9.500 1.500 17 9l-7.500 7.500" stroke="#8a8b8e" stroke-width="2.200"/>`)}
          ${icon(19, 19, "0 0 19 19", svg`<path d="M16.300 12A7.500 7.500 0 1 1 14.800 4l2 2" stroke="#f1f3f4" stroke-width="2.200"/><path d="M18.500.5v8h-8z" fill="#f1f3f4"/>`)}
        </span>
        <div class="omni">
          ${icon(17, 17, "0 0 17 17", svg`<circle cx="8.500" cy="8.500" r="7.500" stroke="#dfe1e5" stroke-width="1.700"/><path d="M8.500 7.500v5M8.500 4.200v2" stroke="#dfe1e5" stroke-width="2"/>`)}
          <span class="url"><b>localhost</b>:3000/questions/26</span>
          <span class="star">${icon(19, 18, "0 0 19 18", svg`<path d="m9.500 1.800 2.100 5.300 5.600.4-4.300 3.600 1.400 5.500-4.800-3-4.800 3 1.400-5.500L1.800 7.500l5.600-.4z" stroke="#dadce0" stroke-width="1.600"/>`)}</span>
        </div>
        <div class="exts">
          ${extensions.map(e => html`<span class="ext">${e}</span>`)}
          <i class="vsep"></i>
          <span class="avatar">${icon(27, 28, "0 0 27 28", svg`<clipPath id="c"><ellipse cx="13.500" cy="14" rx="13.500" ry="14"/></clipPath><g clip-path="url(#c)"><path fill="#4a2418" d="M0 0h27v28H0z"/><path fill="#8a6550" d="M13 3h8v11h-8z"/><path fill="#d8c6b0" d="M15 5h4v4h-4z"/><path fill="#a98a90" d="M2 16h5l4 10H4z"/><path fill="#2e2a4a" d="M18 14h9v9h-8z"/><path fill="#e8d8cc" d="M12 22h6l-1 5h-5z"/><path fill="#1e0e0c" d="M0 5h8v5H0zM9 15h7v5H9z"/><circle cx="4.500" cy="15" r="2.200" fill="#d29a7c"/><circle cx="21" cy="15" r="1.800" fill="#b98468"/></g>`)}</span>
          <span class="dots">${icon(4, 20, "0 0 4 20", svg`<g fill="#f1f3f4"><circle cx="2" cy="3" r="2"/><circle cx="2" cy="10" r="2"/><circle cx="2" cy="17" r="2"/></g>`)}</span>
        </div>
      </div>
      <div class="bookmarks ui">
        ${bookmarks.map(b => html`<span class="bm" style="width:${b.w}px"><span class="bmi" style="width:${b.iw + b.g}px">${b.art}</span>${b.label}</span>`)}
      </div>
      <div class="edge"></div>`;
  }

  private question() {
    const cell = "#78c4d4";
    return html`<div class="main">
      <div class="titlerow"><h1>Is there a way to interpolate CSS variables with url()?</h1><div class="ask">Ask Question</div></div>
      <div class="asked"><span>Asked</span>11. April at 0:42</div>
      <div class="rule"></div>
      <div class="post">
        <div class="stats">
          ${[["1", "answers"], ["2", "comments"], ["1", "tags"]].map(([n, l]) => html`<div class="stat"><b>${n}</b><span>${l}</span></div>`)}
        </div>
        <div class="body">
          <div class="text">
            <div>I want to store my background URLs in custom properties (CSS variables) and use them with the background</div>
            <div>property. However, I couldn't find a way to interpolate the string when using it as a parameter in url(). Here is</div>
            <div>my sample code: I know that this can be easily done in Sass or LESS using the interpolation function but I'm</div>
            <div>curious if there is a way to do it without any pre-processor.</div>
          </div>
          <div class="qtag"><span class="chip">CSS</span></div>
          <div class="actions">
            <div class="links"><span>share</span><span>follow</span></div>
            <div class="card">asked 11. April at 0:42
              <div class="who">${icon(40, 40, "0 0 40 40", svg`<rect width="40" height="40" rx="3" fill="#f0f0f0"/><path fill=${cell} d="M3 3h7v7H3zM30 3h7v7h-7zM10 10h20v7h7v20H23v-7h7V17h-7v13h-6V17h-7v13h7v7H3V17h7z"/>`)}<span>pratik</span></div>
            </div>
          </div>
          <div class="comments">
            <div class="comment"><div class="ln">You sure you don't want funcs to be an array, if you're using numeric indices? Just a heads up. – <span class="userchip">rithik</span> <em>11. April at 0:48</em></div></div>
            <div class="comment">
              <div class="ln">Another simple and explaned solution: 1) Nested Functions have access to the scope "above" them; 2) a closure solution...</div>
              <div class="ln">"A closure is a function having access to the parent scope, even after the parent function has closed – <span class="userchip">mayank</span> <em>11. April at</em></div>
              <div class="ln"><em>0:56</em></div>
              <div class="ln del">delete</div>
            </div>
          </div>
          <div class="addc">add comment</div>
        </div>
      </div>
      <div class="arow"><span>Answers</span><div class="group"><div class="g1">Active</div><div class="g2">Oldest</div><div class="g3">Votes</div></div></div>
      <div class="answer">
        <div class="vote">
          ${icon(34, 20, "0 0 34 20", svg`<path d="M2 18h30L17 2z" fill="#bbc0c4" stroke="#bbc0c4" stroke-width="3.500" stroke-linejoin="round"/>`)}
          <span>0</span>
          ${icon(34, 20, "0 0 34 20", svg`<path d="M2 2h30L17 18z" fill="#bbc0c4" stroke="#bbc0c4" stroke-width="3.500" stroke-linejoin="round"/>`)}
        </div>
        <div class="atext">
          <div>With the relatively widespread availability of the Array.prototype.forEach function (in 2015), it's worth noting that in</div>
          <div>those situations involving iteration primarily over an array of values, .forEach() provides a clean, natural way to</div>
          <div>get a distinct closure for every iteration. That is, assuming you've got some sort of array containing values (DOM</div>
          <div>references, objects, whatever), and the problem arises of setting up callbacks specific to each element, you can</div>
        </div>
      </div>
    </div>`;
  }

  private rightRail() {
    return html`<div class="right">
      <div class="widget">
        ${blog.map((b, i) => b.head ? html`<div class="whead">${b.head}</div>`
          : html`<div class=${classMap({ witem: true, two: b.lines!.length > 1, last: i === blog.length - 1 })}>${pencil}${b.lines!.map(l => html`<div>${l}</div>`)}</div>`)}
      </div>
      <div class="ttt">Top Ten Tags</div>
      ${[["java", "3"], ["node.js", "2"], ["Javascript", "2"], ["timezone", "1"]].map(([t, n]) => html`<div class="trow"><span class="chip">${t}</span><span class="x">× ${n}</span></div>`)}
      <div class="trow"><span class="chip">html</span></div>
    </div>`;
  }

  private taskbar() {
    return html`<div class="taskbar ui">
      <span class="win">${icon(20, 20, "0 0 20 20", svg`<path d="M0 3 8.800 1.700v7.800H0zM9.800 1.500 20 0v9.500H9.800zM0 10.500h8.800v7.800L0 17zM9.800 10.500H20V20L9.800 18.500z" fill="#fff"/>`)}</span>
      <div class="tsearch">${icon(20, 21, "0 0 20 21", svg`<circle cx="12.500" cy="7.500" r="6.500" stroke="#fff" stroke-width="1.500"/><path d="M8 12.300.8 20" stroke="#fff" stroke-width="1.600"/>`)}<span>Type here to search</span></div>
      ${taskApps.map(a => html`<span class=${classMap({ app: true, run: !!a.run, active: !!a.active })}>${a.art}</span>`)}
      <div class="tray">
        <span class="t1">${tray.chevron}</span><span class="t2">${tray.sound}</span><span class="t3">${tray.battery}</span><span class="t4">${tray.wifi}</span>ENG
        <div class="clock"><div>23:18</div><div>16-04-2020</div></div>
        <span class="note">${icon(20, 20, "0 0 20 20", svg`<path d="M0 0h20v16h-9l-5 4v-4H0z" fill="#fff"/><path d="M4 4.500h12M4 8h12M4 11.500h8" stroke="#222" stroke-width="1.300"/>`)}<b>3</b></span>
        <i class="peek"></i>
      </div>
    </div>`;
  }

  render() {
    return html`
      ${this.chrome()}
      <div class="viewport">
        <div class="page">
          <div class="header">
            <div class="logo">${stackIcon(24, 30, "#6f7479", "#fb9a0e")}<span class="logotext">stack<b>overflow</b></span></div>
            <div class="products">Products</div>
            <div class="search">${icon(25, 25, "0 0 25 25", svg`<circle cx="10.500" cy="10.500" r="8.800" stroke="#bbc0c4" stroke-width="3.200"/><path d="m17 17 6 6.500" stroke="#bbc0c4" stroke-width="3.400"/>`)}<span>Search…</span></div>
            <div class="logout">Log out</div>
          </div>
          <div class="cols">
            <div class="side">
              ${sideItems.map((s, i) => html`<div class="${s.kind} ${i === 5 ? "last" : ""}">${s.kind === "active"
                ? html`${icon(20, 22, "0 0 20 22", svg`<ellipse cx="10" cy="11" rx="10" ry="10.500" fill="#000"/><path d="M9.500 2.500 13.500 4l-2 2.500-2.500.5-1 3-3 1-2.500-3C3.500 5 6 3 9.500 2.500zM8.500 12.500l4-.5 2.500 2-1.500 2-1.500 4-1.500.5-1-4-1.500-2zM16 9l2.500.5v2.500l-1.500 1-1.500-2z" fill="#fff"/>`)}<span>${s.text}</span>`
                : s.text}</div>`)}
            </div>
            ${this.question()}
            ${this.rightRail()}
          </div>
        </div>
        <div class="scroll">
          ${icon(9, 5, "0 0 9 5", svg`<path d="M0 5h9L4.500 0z" fill="#a3a3a3"/>`)}
          <i class="thumb"></i>
          ${icon(9, 5, "0 0 9 5", svg`<path d="M0 0h9L4.500 5z" fill="#505050"/>`)}
        </div>
      </div>
      ${this.taskbar()}`;
  }
}
